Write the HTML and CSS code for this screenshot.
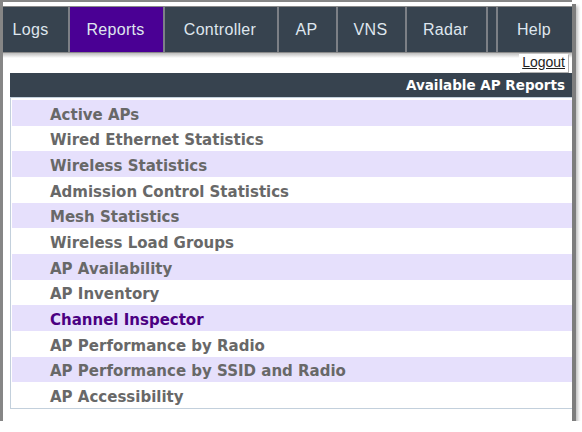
FILE: index.html
```html
<!DOCTYPE html>
<html>
<head>
<meta charset="utf-8">
<link rel="stylesheet" href="styles.css">
</head>
<body>
<div class="window">
  <nav class="nav">
    <div class="tab tab-logs">Logs</div>
    <div class="tab tab-reports active">Reports</div>
    <div class="tab tab-controller">Controller</div>
    <div class="tab tab-ap">AP</div>
    <div class="tab tab-vns">VNS</div>
    <div class="tab tab-radar">Radar</div>
    <div class="tab tab-blank"></div>
    <div class="tab tab-help">Help</div>
  </nav>
  <div class="logout-bar"><a class="logout" href="#">Logout</a></div>
  <div class="reports">
    <div class="reports-head">Available AP Reports</div>
    <div class="reports-list">
      <div class="row odd">Active APs</div>
      <div class="row">Wired Ethernet Statistics</div>
      <div class="row odd">Wireless Statistics</div>
      <div class="row">Admission Control Statistics</div>
      <div class="row odd">Mesh Statistics</div>
      <div class="row">Wireless Load Groups</div>
      <div class="row odd">AP Availability</div>
      <div class="row">AP Inventory</div>
      <div class="row odd current">Channel Inspector</div>
      <div class="row">AP Performance by Radio</div>
      <div class="row odd">AP Performance by SSID and Radio</div>
      <div class="row">AP Accessibility</div>
    </div>
  </div>
</div>
</body>
</html>
```
FILE: styles.css
```css
html, body {
  margin: 0;
  padding: 0;
  background: #ffffff;
}

.window {
  box-sizing: border-box;
  width: 572px;
  height: 421px;
  background: #ffffff;
  border-left: 3px solid #868686;
  border-top: 2px solid #868686;
  padding-top: 4px;
  box-shadow: 4px 4px 0 #7d7d7d, 6px 6px 3px rgba(0, 0, 0, 0.25);
}

.nav {
  display: grid;
  grid-template-columns: 65px 95px 114px 59px 69px 81px 10px 76px;
  height: 45px;
  background: #37434f;
  border-top: 1px solid #8a8a8a;
  border-bottom: 1px solid #8a8a8a;
}

.tab {
  display: flex;
  align-items: center;
  justify-content: center;
  padding-right: 2px;
  color: #dfe6ee;
  font-family: "Liberation Sans", Arial, sans-serif;
  font-size: 16px;
  letter-spacing: 0.3px;
  border-left: 2px solid #7c8086;
}

.tab-logs {
  border-left: none;
  padding-right: 10px;
}

.tab.active {
  background: #4a0094;
}

.logout-bar {
  height: 20px;
  display: flex;
  justify-content: flex-end;
  align-items: flex-start;
  background: linear-gradient(#bdbdbd, #ffffff 5px);
}

.logout {
  margin-top: 1px;
  margin-right: 4px;
  padding: 0 3px 2px 3px;
  background: #ffffff;
  color: #1e1e1e;
  font-family: "Liberation Sans", Arial, sans-serif;
  font-size: 14px;
  line-height: 16px;
  text-decoration: underline;
  box-shadow: 1px 1px 0 #b0b0b0;
}

.reports {
  margin-left: 7px;
}

.reports-head {
  height: 24px;
  line-height: 25px;
  background: #37434f;
  color: #ffffff;
  text-align: right;
  padding-right: 7px;
  font-family: "DejaVu Sans", Verdana, sans-serif;
  font-weight: bold;
  font-size: 13.5px;
}

.reports-list {
  display: grid;
  grid-auto-rows: 25.67px;
  border: 1px solid #c3d0dc;
  border-right: none;
  padding: 2px 0 0 1px;
}

.row {
  display: flex;
  align-items: center;
  padding-left: 38px;
  padding-top: 4px;
  color: #686868;
  font-family: "DejaVu Sans", Verdana, sans-serif;
  font-weight: bold;
  font-size: 15px;
  background: #ffffff;
}

.row.odd {
  background: #e6e0fc;
}

.row.current {
  color: #4b0082;
}
```
